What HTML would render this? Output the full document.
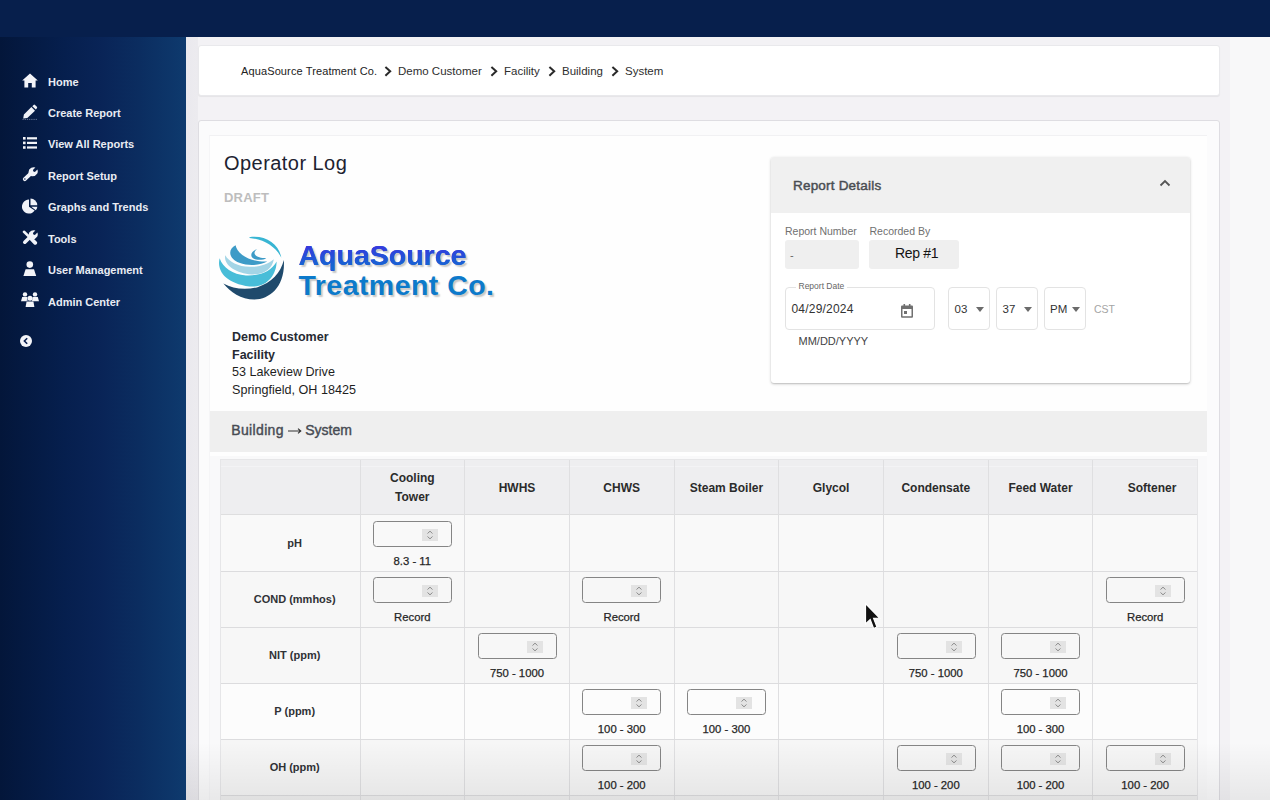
<!DOCTYPE html>
<html><head><meta charset="utf-8">
<style>
*{box-sizing:border-box;margin:0;padding:0}
html,body{width:1270px;height:800px;overflow:hidden}
body{position:relative;background:#f2f1f4;font-family:"Liberation Sans",sans-serif;color:#222}
.a{position:absolute}
#top{left:0;top:0;width:1270px;height:37px;background:#071f4c}
#side{left:0;top:37px;width:186px;height:763px;background:linear-gradient(90deg,#03163a 0%,#061f4e 35%,#092457 55%,#0b2d60 75%,#0e3a6e 100%)}
.nav{position:absolute;left:48px;font-size:11px;font-weight:bold;color:#e9ecf3;white-space:nowrap;line-height:12px}
.ic{position:absolute;fill:#f4f5f8}
#mainbg{left:186px;top:37px;width:1084px;height:763px;background:linear-gradient(90deg,#eae9ee 0,#ecebef 12px,#f3f2f5 12px,#f3f2f5 1044px,#f8f8f9 1044px)}
#crumb{left:198px;top:45px;width:1022px;height:51px;background:#fff;border:1px solid #e9e9ec;border-radius:3px;box-shadow:0 1px 1px rgba(0,0,0,.06)}
.cr{position:absolute;top:64px;font-size:11.5px;color:#2e2e2e;white-space:nowrap;line-height:14px}
.chev{position:absolute;top:65.5px}
#card{left:198px;top:120px;width:1022px;height:700px;background:#fbfbfc;border:1px solid #dedde2;border-radius:3px}
#inner{left:209px;top:135px;width:998px;height:680px;background:#fefefe;border-left:1px solid #f5f5f7;border-top:1px solid #f1f1f3}

.t{position:absolute;white-space:nowrap}
#rd{left:771px;top:157px;width:419px;height:226px;background:#fff;border-radius:3px;box-shadow:0 1px 3px rgba(0,0,0,.22),0 1px 1px rgba(0,0,0,.08)}
#rdh{left:771px;top:157px;width:419px;height:56px;background:#f0f0f0;border-radius:3px 3px 0 0}
.fld{position:absolute;background:#efefef;border-radius:3px}
.ol{position:absolute;border:1px solid #e3e3e3;border-radius:4px;background:#fff}
.arr{position:absolute;width:0;height:0;border-left:4px solid transparent;border-right:4px solid transparent;border-top:5px solid #6b6b6b}
#strip{left:210px;top:411px;width:997px;height:41px;background:#efefef}
#tbl{left:220px;top:459px;width:978px;height:345px;background:#f9f9f9;border:1px solid #e6e6e8}
#thead{left:221px;top:460px;width:976px;height:55px;background:#eeeef0}
.vl{position:absolute;top:460px;width:1px;height:340px;background:#dfdfe1}
.hl{position:absolute;left:221px;width:976px;height:1px;background:#dcdcde}
.th{position:absolute;font-size:12px;font-weight:bold;color:#2b2b2b;text-align:center;line-height:18.5px}
.rl{position:absolute;font-size:11px;font-weight:bold;color:#303236;text-align:center;width:140px;line-height:12px}
.inp{position:absolute;width:79px;height:26px;border:1px solid #858585;border-radius:3.5px;background:transparent}
.sp{position:absolute;left:48px;top:7px;width:16px;height:12px;background:#e3e3e3}
.lb{position:absolute;font-size:11.3px;color:#262626;-webkit-text-stroke:.25px #262626;text-align:center;width:104px;line-height:12px}
</style></head><body>
<div id="top" class="a"></div>
<div id="side" class="a"></div>

<svg class="a" style="left:22px;top:73px" width="16" height="15" viewBox="0 0 16 15"><path fill="#f3f4f8" d="M8 0.5 L15.8 7.6 L13.6 7.6 L13.6 14.5 L9.8 14.5 L9.8 10 L6.2 10 L6.2 14.5 L2.4 14.5 L2.4 7.6 L0.2 7.6 Z"/></svg>
<div class="nav" style="top:76px">Home</div>
<svg class="a" style="left:21px;top:104px" width="17" height="16" viewBox="0 0 17 16"><path fill="#f0f2f8" d="M2.2 14.4 L2.9 10.6 L10.4 3.1 L14 6.7 L6.3 13.9 Z M11.3 2.2 L12.6 0.9 Q13.3 0.3 14 0.9 L15.9 2.8 Q16.5 3.5 15.9 4.2 L14.8 5.5 Z"/><path stroke="#9aa4c0" stroke-width="0.7" stroke-dasharray="1.2 1" d="M1.5 15.4 H16"/></svg>
<div class="nav" style="top:107px">Create Report</div>
<svg class="a" style="left:23px;top:137px" width="15" height="13" viewBox="0 0 15 13"><g fill="#f3f4f8"><rect x="0" y="0" width="2.6" height="2.6"/><rect x="4" y="0.2" width="10" height="2.2"/><rect x="0" y="4.6" width="2.6" height="2.6"/><rect x="4" y="4.8" width="10" height="2.2"/><rect x="0" y="9.2" width="2.6" height="2.6"/><rect x="4" y="9.4" width="10" height="2.2"/></g></svg>
<div class="nav" style="top:138px">View All Reports</div>
<svg class="a" style="left:22px;top:167px" width="16" height="15" viewBox="0 0 16 15"><g fill="#f0f2f8"><path d="M6.6 6.4 Q6 2.4 9.3 0.8 Q11.4 -0.2 13.4 0.6 L10.9 3.1 L11.4 4.6 L12.9 5.1 L15.4 2.6 Q16.2 4.6 15.3 6.6 Q13.6 9.6 9.6 9.3 Z"/><line x1="2.8" y1="12.2" x2="8.4" y2="6.8" stroke="#f0f2f8" stroke-width="3.9" stroke-linecap="round"/></g><circle cx="2.9" cy="12.1" r="0.75" fill="#0a2050"/></svg>
<div class="nav" style="top:170px">Report Setup</div>
<svg class="a" style="left:22px;top:198px" width="16" height="16" viewBox="0 0 16 16"><g fill="#f0f2f8"><path d="M7 1.6 V8.8 L12.7 12.6 A7 7 0 1 1 7 1.6 Z"/><path d="M8.5 0.6 A7 7 0 0 1 15.3 7.3 H8.5 Z"/><path d="M9.3 8.7 H15.3 A7 7 0 0 1 13.8 12.3 Z"/></g></svg>
<div class="nav" style="top:201px">Graphs and Trends</div>
<svg class="a" style="left:22px;top:230px" width="16" height="15" viewBox="0 0 16 15"><g fill="#f0f2f8"><line x1="2" y1="1.8" x2="9" y2="8.6" stroke="#f0f2f8" stroke-width="2.6" stroke-linecap="round"/><line x1="9.4" y1="9" x2="13.2" y2="12.8" stroke="#f0f2f8" stroke-width="3.8" stroke-linecap="round"/><path d="M6.6 6.4 Q6 2.4 9.3 0.8 Q11.4 -0.2 13.4 0.6 L10.9 3.1 L11.4 4.6 L12.9 5.1 L15.4 2.6 Q16.2 4.6 15.3 6.6 Q13.6 9.6 9.6 9.3 Z"/><line x1="2.8" y1="12.2" x2="8.4" y2="6.8" stroke="#f0f2f8" stroke-width="3.6" stroke-linecap="round"/></g></svg>
<div class="nav" style="top:233px">Tools</div>
<svg class="a" style="left:23px;top:261px" width="14" height="16" viewBox="0 0 14 16"><g fill="#f3f4f8"><circle cx="6.8" cy="3.6" r="3.3"/><path d="M2.6 8.2 L11 8.2 L13.2 15 L0.4 15 Z"/></g></svg>
<div class="nav" style="top:264px">User Management</div>
<svg class="a" style="left:21px;top:292px" width="18" height="16" viewBox="0 0 18 16"><g fill="#f3f4f8"><circle cx="4" cy="2.4" r="2.2"/><circle cx="14" cy="2.4" r="2.2"/><path d="M1.2 5 L6.4 5 L7 9.2 L0 9.2 Z M11.6 5 L16.8 5 L18 9.2 L11 9.2 Z"/><circle cx="9" cy="6.2" r="2.5"/><path d="M5.6 9.4 L12.4 9.4 L13.4 15 L4.6 15 Z"/></g><g fill="#07205a" opacity="0.6"><path d="M6.3 5 L7 9.2 L5.6 9.4Z"/></g></svg>
<div class="nav" style="top:296px">Admin Center</div>
<svg class="a" style="left:19px;top:334px" width="14" height="14" viewBox="0 0 14 14"><circle cx="7" cy="7" r="6" fill="#f3f4f8"/><path d="M8.2 4.2 L5.4 7 L8.2 9.8" stroke="#0a1f50" stroke-width="1.6" fill="none"/></svg>
<div id="mainbg" class="a"></div>
<div id="crumb" class="a"></div>
<div class="cr" style="left:241px;font-size:11px;color:#222;letter-spacing:.12px">AquaSource Treatment Co.</div>
<svg class="a chev" style="left:384px" width="8" height="11" viewBox="0 0 8 11"><path d="M1.4 0.9 L6.2 5.3 L1.4 9.7" stroke="#2a2a2a" stroke-width="2" fill="none"/></svg>
<div class="cr" style="left:398px">Demo Customer</div>
<svg class="a chev" style="left:490px" width="8" height="11" viewBox="0 0 8 11"><path d="M1.4 0.9 L6.2 5.3 L1.4 9.7" stroke="#2a2a2a" stroke-width="2" fill="none"/></svg>
<div class="cr" style="left:504px">Facility</div>
<svg class="a chev" style="left:548px" width="8" height="11" viewBox="0 0 8 11"><path d="M1.4 0.9 L6.2 5.3 L1.4 9.7" stroke="#2a2a2a" stroke-width="2" fill="none"/></svg>
<div class="cr" style="left:562px">Building</div>
<svg class="a chev" style="left:611px" width="8" height="11" viewBox="0 0 8 11"><path d="M1.4 0.9 L6.2 5.3 L1.4 9.7" stroke="#2a2a2a" stroke-width="2" fill="none"/></svg>
<div class="cr" style="left:625px">System</div>

<div id="card" class="a"></div>
<div id="inner" class="a"></div>
<div class="t" style="left:224px;top:153px;font-size:20px;line-height:20px;color:#1d2230;letter-spacing:.45px">Operator Log</div>
<div class="t" style="left:224px;top:191px;font-size:13px;line-height:13px;font-weight:bold;color:#bdbdbd;letter-spacing:.2px">DRAFT</div>

<svg class="a" style="left:214px;top:230px" width="80" height="75" viewBox="0 0 853 800">
<path fill="#1f4a6c" d="M100,570 C170,660 290,742 430,742 C600,737 762,600 745,320 C712,455 615,562 458,612 C330,642 200,628 100,570 Z"/>
<path fill="#48bdd8" d="M60,300 C28,425 110,565 380,602 C562,617 665,482 668,335 C612,442 482,492 340,484 C198,472 94,402 60,300 Z"/>
<path fill="#a3d5e6" d="M120,268 C98,372 230,462 400,474 C532,480 624,410 638,312 C572,370 470,396 380,393 C258,388 160,340 120,268 Z"/>
<path fill="#3d9bc7" d="M230,163 C148,200 148,302 270,350 C382,392 502,372 567,335 C460,340 362,312 302,266 C256,232 236,196 230,163 Z"/>
<path fill="#3d9bc7" d="M462,203 C383,228 373,297 450,314 C490,322 537,313 557,300 C502,300 457,290 437,262 C423,240 440,215 462,203 Z"/>
<path fill="#38b5d3" d="M378,76 C542,52 692,140 718,296 C655,172 530,100 378,84 Z"/>
</svg>
<div class="t" style="left:298.5px;top:241px;font-size:28.5px;font-weight:bold;color:#2352d8;line-height:28.5px;text-shadow:2px 2px 1.5px rgba(0,0,0,.22)">AquaSource</div><div class="t" style="left:298.5px;top:241px;font-size:28.5px;font-weight:bold;line-height:28.5px;color:transparent;background:linear-gradient(180deg,#3a34df 0,#3a34df 3.5px,#1566d2 25px,#1566d2 28.5px);-webkit-background-clip:text;background-clip:text">AquaSource</div>
<div class="t" style="left:298.5px;top:271px;font-size:28.5px;font-weight:bold;color:#0c7acb;line-height:28.5px;letter-spacing:.45px;text-shadow:2px 2px 1.5px rgba(0,0,0,.22)">Treatment Co.</div>

<div class="t" style="left:232px;top:331px;font-size:12.5px;line-height:12.5px;font-weight:bold;color:#262a33">Demo Customer</div>
<div class="t" style="left:232px;top:348.5px;font-size:12.5px;line-height:12.5px;font-weight:bold;color:#262a33">Facility</div>
<div class="t" style="left:232px;top:366px;font-size:12.6px;line-height:12.5px;color:#1e1e1e">53 Lakeview Drive</div>
<div class="t" style="left:232px;top:383.5px;font-size:12.6px;line-height:12.5px;color:#1e1e1e">Springfield, OH 18425</div>

<div id="rd" class="a"></div>
<div id="rdh" class="a"></div>
<div class="t" style="left:793px;top:178.5px;font-size:13.5px;line-height:13px;color:#4a4d52;letter-spacing:.2px;-webkit-text-stroke:.45px #4a4d52">Report Details</div>
<svg class="a" style="left:1159px;top:179px" width="12" height="8" viewBox="0 0 12 8"><path d="M1.5 6.5 L6 2 L10.5 6.5" stroke="#555" stroke-width="1.8" fill="none"/></svg>
<div class="t" style="left:785px;top:226px;font-size:10.5px;line-height:10.5px;color:#707070">Report Number</div>
<div class="t" style="left:869.5px;top:226px;font-size:10.5px;line-height:10.5px;color:#707070">Recorded By</div>
<div class="fld" style="left:784.5px;top:240px;width:74px;height:29px"></div>
<div class="t" style="left:790px;top:250px;font-size:11px;line-height:11px;color:#666">-</div>
<div class="fld" style="left:869px;top:240px;width:90px;height:29px"></div>
<div class="t" style="left:895px;top:245.5px;font-size:14px;line-height:14px;color:#141414;letter-spacing:-.3px">Rep #1</div>
<div class="ol" style="left:785px;top:287px;width:149.5px;height:43px"></div>
<div class="t" style="left:796px;top:280.7px;font-size:8.5px;line-height:10px;color:#666;background:#fff;padding:0 2.5px">Report Date</div>
<div class="t" style="left:791.5px;top:303px;font-size:12px;line-height:12px;color:#333;letter-spacing:.2px">04/29/2024</div>
<svg class="a" style="left:901px;top:304px" width="12" height="14" viewBox="0 0 12 14"><path fill="#707070" d="M2.5 0 h1.6 v1.6 h3.8 V0 h1.6 v1.6 H11 Q12 1.6 12 2.8 V12.6 Q12 13.8 11 13.8 H1 Q0 13.8 0 12.6 V2.8 Q0 1.6 1 1.6 h1.5 Z M1.5 5 V12.3 H10.5 V5 Z"/><rect x="3" y="7" width="3" height="3" fill="#707070"/></svg>
<div class="t" style="left:798.5px;top:335.5px;font-size:11px;line-height:11px;color:#444">MM/DD/YYYY</div>
<div class="ol" style="left:948px;top:287px;width:42px;height:43px"></div>
<div class="t" style="left:954.5px;top:303.5px;font-size:11.5px;line-height:11.5px;color:#333">03</div>
<div class="arr" style="left:976px;top:307px"></div>
<div class="ol" style="left:996px;top:287px;width:42px;height:43px"></div>
<div class="t" style="left:1002.5px;top:303.5px;font-size:11.5px;line-height:11.5px;color:#333">37</div>
<div class="arr" style="left:1024px;top:307px"></div>
<div class="ol" style="left:1044px;top:287px;width:42px;height:43px"></div>
<div class="t" style="left:1050px;top:303.5px;font-size:11.5px;line-height:11.5px;color:#333">PM</div>
<div class="arr" style="left:1072px;top:307px"></div>
<div class="t" style="left:1094px;top:304px;font-size:10.5px;line-height:10.5px;color:#a5a5a5">CST</div>

<div id="strip" class="a"></div>
<div class="t" style="left:231.3px;top:423px;font-size:14px;line-height:14px;color:#474b53;letter-spacing:.34px;-webkit-text-stroke:.4px #474b53">Building</div><svg class="a" style="left:287.5px;top:427.5px" width="14" height="6" viewBox="0 0 14 6"><path d="M0 3 H12.5 M10 0.6 L12.8 3 L10 5.4" stroke="#333" stroke-width="1.1" fill="none"/></svg><div class="t" style="left:305.2px;top:423px;font-size:14px;line-height:14px;color:#474b53;letter-spacing:-.0px;-webkit-text-stroke:.4px #474b53">System</div>
<div class="a" style="left:210px;top:456px;width:997px;height:344px;background:#f9f9fa"></div><div id="tbl" class="a"></div>
<div id="thead" class="a"></div>
<div class="hl" style="top:514px;background:#dededf"></div><div class="hl" style="top:466px;background:#f3f3f5"></div>
<div class="a" style="left:221px;top:515.0px;width:976px;height:56px;background:#f9f9f9"></div><div class="a" style="left:221px;top:571.0px;width:976px;height:56px;background:#f7f7f7"></div><div class="a" style="left:221px;top:627.0px;width:976px;height:56px;background:#f7f7f7"></div><div class="a" style="left:221px;top:683.0px;width:976px;height:56px;background:#fcfcfc"></div><div class="a" style="left:221px;top:739.0px;width:976px;height:56px;background:#f6f6f6"></div><div class="a" style="left:221px;top:795.0px;width:976px;height:56px;background:#f0f0f0"></div>
<div class="vl" style="left:359.5px"></div><div class="vl" style="left:464.2px"></div><div class="vl" style="left:568.9px"></div><div class="vl" style="left:673.6px"></div><div class="vl" style="left:778.3px"></div><div class="vl" style="left:883.0px"></div><div class="vl" style="left:987.6px"></div><div class="vl" style="left:1092.3px"></div><div class="hl" style="top:570.5px"></div><div class="hl" style="top:626.5px"></div><div class="hl" style="top:682.5px"></div><div class="hl" style="top:738.5px"></div><div class="hl" style="top:794.5px"></div>
<div class="th" style="left:362.3px;top:469.3px;width:100px">Cooling<br>Tower</div><div class="th" style="left:467.0px;top:478.6px;width:100px">HWHS</div><div class="th" style="left:571.7px;top:478.6px;width:100px">CHWS</div><div class="th" style="left:676.4px;top:478.6px;width:100px">Steam Boiler</div><div class="th" style="left:781.1px;top:478.6px;width:100px">Glycol</div><div class="th" style="left:885.8px;top:478.6px;width:100px">Condensate</div><div class="th" style="left:990.5px;top:478.6px;width:100px">Feed Water</div><div class="th" style="left:1102.0px;top:478.6px;width:100px">Softener</div>
<div class="rl" style="left:224.7px;top:537.3px">pH</div><div class="rl" style="left:224.7px;top:593.3px">COND (mmhos)</div><div class="rl" style="left:224.7px;top:649.3px">NIT (ppm)</div><div class="rl" style="left:224.7px;top:705.3px">P (ppm)</div><div class="rl" style="left:224.7px;top:761.3px">OH (ppm)</div>
<div class="inp" style="left:373.0px;top:520.6px"><div class="sp"><svg width="16" height="12" viewBox="0 0 16 12" style="display:block"><path d="M5.5 4.5 L8 2.2 L10.5 4.5 M5.5 7.5 L8 9.8 L10.5 7.5" stroke="#8c8c8c" stroke-width="1" fill="none"/></svg></div></div><div class="lb" style="left:360.3px;top:555.0px">8.3 - 11</div>
<div class="inp" style="left:373.0px;top:576.6px"><div class="sp"><svg width="16" height="12" viewBox="0 0 16 12" style="display:block"><path d="M5.5 4.5 L8 2.2 L10.5 4.5 M5.5 7.5 L8 9.8 L10.5 7.5" stroke="#8c8c8c" stroke-width="1" fill="none"/></svg></div></div><div class="lb" style="left:360.3px;top:611.0px">Record</div>
<div class="inp" style="left:582.4px;top:576.6px"><div class="sp"><svg width="16" height="12" viewBox="0 0 16 12" style="display:block"><path d="M5.5 4.5 L8 2.2 L10.5 4.5 M5.5 7.5 L8 9.8 L10.5 7.5" stroke="#8c8c8c" stroke-width="1" fill="none"/></svg></div></div><div class="lb" style="left:569.7px;top:611.0px">Record</div>
<div class="inp" style="left:1105.9px;top:576.6px"><div class="sp"><svg width="16" height="12" viewBox="0 0 16 12" style="display:block"><path d="M5.5 4.5 L8 2.2 L10.5 4.5 M5.5 7.5 L8 9.8 L10.5 7.5" stroke="#8c8c8c" stroke-width="1" fill="none"/></svg></div></div><div class="lb" style="left:1093.2px;top:611.0px">Record</div>
<div class="inp" style="left:477.7px;top:632.6px"><div class="sp"><svg width="16" height="12" viewBox="0 0 16 12" style="display:block"><path d="M5.5 4.5 L8 2.2 L10.5 4.5 M5.5 7.5 L8 9.8 L10.5 7.5" stroke="#8c8c8c" stroke-width="1" fill="none"/></svg></div></div><div class="lb" style="left:465.0px;top:667.0px">750 - 1000</div>
<div class="inp" style="left:896.5px;top:632.6px"><div class="sp"><svg width="16" height="12" viewBox="0 0 16 12" style="display:block"><path d="M5.5 4.5 L8 2.2 L10.5 4.5 M5.5 7.5 L8 9.8 L10.5 7.5" stroke="#8c8c8c" stroke-width="1" fill="none"/></svg></div></div><div class="lb" style="left:883.8px;top:667.0px">750 - 1000</div>
<div class="inp" style="left:1001.2px;top:632.6px"><div class="sp"><svg width="16" height="12" viewBox="0 0 16 12" style="display:block"><path d="M5.5 4.5 L8 2.2 L10.5 4.5 M5.5 7.5 L8 9.8 L10.5 7.5" stroke="#8c8c8c" stroke-width="1" fill="none"/></svg></div></div><div class="lb" style="left:988.5px;top:667.0px">750 - 1000</div>
<div class="inp" style="left:582.4px;top:688.6px"><div class="sp"><svg width="16" height="12" viewBox="0 0 16 12" style="display:block"><path d="M5.5 4.5 L8 2.2 L10.5 4.5 M5.5 7.5 L8 9.8 L10.5 7.5" stroke="#8c8c8c" stroke-width="1" fill="none"/></svg></div></div><div class="lb" style="left:569.7px;top:723.0px">100 - 300</div>
<div class="inp" style="left:687.1px;top:688.6px"><div class="sp"><svg width="16" height="12" viewBox="0 0 16 12" style="display:block"><path d="M5.5 4.5 L8 2.2 L10.5 4.5 M5.5 7.5 L8 9.8 L10.5 7.5" stroke="#8c8c8c" stroke-width="1" fill="none"/></svg></div></div><div class="lb" style="left:674.4px;top:723.0px">100 - 300</div>
<div class="inp" style="left:1001.2px;top:688.6px"><div class="sp"><svg width="16" height="12" viewBox="0 0 16 12" style="display:block"><path d="M5.5 4.5 L8 2.2 L10.5 4.5 M5.5 7.5 L8 9.8 L10.5 7.5" stroke="#8c8c8c" stroke-width="1" fill="none"/></svg></div></div><div class="lb" style="left:988.5px;top:723.0px">100 - 300</div>
<div class="inp" style="left:582.4px;top:744.6px"><div class="sp"><svg width="16" height="12" viewBox="0 0 16 12" style="display:block"><path d="M5.5 4.5 L8 2.2 L10.5 4.5 M5.5 7.5 L8 9.8 L10.5 7.5" stroke="#8c8c8c" stroke-width="1" fill="none"/></svg></div></div><div class="lb" style="left:569.7px;top:779.0px">100 - 200</div>
<div class="inp" style="left:896.5px;top:744.6px"><div class="sp"><svg width="16" height="12" viewBox="0 0 16 12" style="display:block"><path d="M5.5 4.5 L8 2.2 L10.5 4.5 M5.5 7.5 L8 9.8 L10.5 7.5" stroke="#8c8c8c" stroke-width="1" fill="none"/></svg></div></div><div class="lb" style="left:883.8px;top:779.0px">100 - 200</div>
<div class="inp" style="left:1001.2px;top:744.6px"><div class="sp"><svg width="16" height="12" viewBox="0 0 16 12" style="display:block"><path d="M5.5 4.5 L8 2.2 L10.5 4.5 M5.5 7.5 L8 9.8 L10.5 7.5" stroke="#8c8c8c" stroke-width="1" fill="none"/></svg></div></div><div class="lb" style="left:988.5px;top:779.0px">100 - 200</div>
<div class="inp" style="left:1105.9px;top:744.6px"><div class="sp"><svg width="16" height="12" viewBox="0 0 16 12" style="display:block"><path d="M5.5 4.5 L8 2.2 L10.5 4.5 M5.5 7.5 L8 9.8 L10.5 7.5" stroke="#8c8c8c" stroke-width="1" fill="none"/></svg></div></div><div class="lb" style="left:1093.2px;top:779.0px">100 - 200</div>
<svg class="a" style="left:864px;top:602px" width="18" height="32" viewBox="0 0 18 32"><path d="M1.5 1.5 L1.5 22 L6.2 17.6 L9.6 26.5 L13 25 L9.6 16.4 L15.6 16.2 Z" fill="#111" stroke="#fff" stroke-width="1.2"/></svg>

<div class="a" style="left:186px;top:742px;width:1084px;height:58px;background:linear-gradient(180deg,rgba(0,0,0,0),rgba(0,0,0,.065))"></div>
</body></html>
